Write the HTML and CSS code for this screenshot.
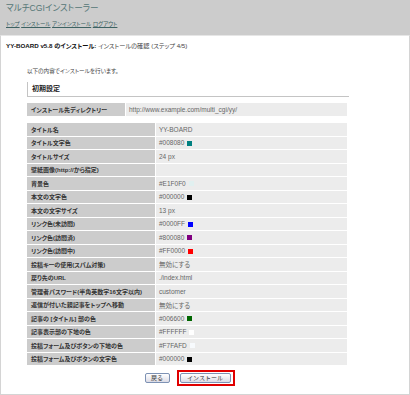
FILE: index.html
```html
<!DOCTYPE html>
<html lang="ja">
<head>
    <meta charset="UTF-8">
    <title>マルチCGIインストーラー</title>
    <link rel="stylesheet" href="styles.css">
</head>
<body>
    <!-- Header -->
    <div class="header">
        <h1>マルチCGIインストーラー</h1>
        <div class="nav">
            <a href="#">トップ</a>
            <a href="#">インストール</a>
            <a href="#">アンインストール</a>
            <a href="#">ログアウト</a>
        </div>
    </div>

    <!-- Main -->
    <div class="main">
        <p class="step"><b>YY-BOARD v5.8 のインストール:</b> インストールの確認 (ステップ 4/5)</p>

        <div class="section">
            <p class="lead">以下の内容でインストールを行います。</p>
            <h2>初期設定</h2>

            <table class="dir">
                <tr><th>インストール先ディレクトリー</th><td>http://www.example.com/multi_cgi/yy/</td></tr>
            </table>

            <table class="settings">
                <tr><th>タイトル名</th><td>YY-BOARD</td></tr>
                <tr><th>タイトル文字色</th><td>#008080 <span class="swatch c-teal"></span></td></tr>
                <tr><th>タイトルサイズ</th><td>24 px</td></tr>
                <tr><th>壁紙画像(http://から指定)</th><td></td></tr>
                <tr><th>背景色</th><td>#E1F0F0 <span class="swatch c-bg"></span></td></tr>
                <tr><th>本文の文字色</th><td>#000000 <span class="swatch c-black"></span></td></tr>
                <tr><th>本文の文字サイズ</th><td>13 px</td></tr>
                <tr><th>リンク色(未訪問)</th><td>#0000FF <span class="swatch c-blue"></span></td></tr>
                <tr><th>リンク色(訪問済)</th><td>#800080 <span class="swatch c-purple"></span></td></tr>
                <tr><th>リンク色(訪問中)</th><td>#FF0000 <span class="swatch c-red"></span></td></tr>
                <tr><th>投稿キーの使用(スパム対策)</th><td>無効にする</td></tr>
                <tr><th>戻り先のURL</th><td>./index.html</td></tr>
                <tr><th>管理者パスワード(半角英数字16文字以内)</th><td>customer</td></tr>
                <tr><th>返信が付いた親記事をトップへ移動</th><td>無効にする</td></tr>
                <tr><th>記事の [タイトル] 部の色</th><td>#006600 <span class="swatch c-green"></span></td></tr>
                <tr><th>記事表示部の下地の色</th><td>#FFFFFF <span class="swatch c-white"></span></td></tr>
                <tr><th>投稿フォーム及びボタンの下地の色</th><td>#F7FAFD <span class="swatch c-form"></span></td></tr>
                <tr><th>投稿フォーム及びボタンの文字色</th><td>#000000 <span class="swatch c-black"></span></td></tr>
            </table>

            <div class="buttons">
                <button class="btn-back">戻る</button>
                <span class="highlight"><button class="btn-install">インストール</button></span>
            </div>
        </div>
    </div>
</body>
</html>
```

FILE: styles.css
```css
/* General */
* {
    box-sizing: border-box;
    margin: 0;
    padding: 0;
}

body {
    width: 410px;
    background-color: #ffffff;
    color: #333333;
    font-family: "Liberation Sans", "Noto Sans CJK JP", sans-serif;
    font-feature-settings: "palt";
}

/* Header */
.header {
    height: 35px;
    background-color: #cccccc;
    padding: 1px 0 0 6px;
}

.header h1 {
    font-size: 8.6px;
    line-height: 14px;
    font-weight: normal;
    color: #557777;
}

.nav {
    margin-top: 5px;
    font-size: 5.5px;
    line-height: 8px;
}

.nav a {
    color: #3d6262;
}

/* Main box */
.main {
    height: 360px;
    border: 1px solid #d4d4d4;
    border-top-color: #e6e6e6;
    padding: 5px 0 0 5px;
}

.step {
    font-size: 6.2px;
    line-height: 10px;
    color: #444444;
}

.step b {
    color: #111111;
}

.section {
    width: 322px;
    margin-left: 21px;
}

.lead {
    margin-top: 15px;
    font-size: 5.6px;
    line-height: 10px;
    color: #444444;
}

.section h2 {
    margin-top: 6px;
    height: 15px;
    padding-left: 4px;
    border-left: 1px solid #c4c4c4;
    border-bottom: 1px solid #c4c4c4;
    font-size: 7px;
    line-height: 14px;
    color: #222222;
}

/* Tables */
table {
    width: 322px;
    border-collapse: separate;
    border-spacing: 1px;
    margin-left: -1px;
    font-size: 6px;
}

th {
    background-color: #cccccc;
    color: #333333;
    text-align: left;
    font-weight: bold;
    padding: 0 4px;
    white-space: nowrap;
}

td {
    background-color: #ececec;
    color: #666666;
    font-size: 6.5px;
    padding: 0 3px;
}

.dir {
    margin-top: 5px;
}

.dir th,
.dir td {
    height: 13px;
}

.dir th {
    width: 98px;
}

.settings {
    margin-top: 5px;
}

.settings th,
.settings td {
    height: 12.5px;
}

.settings th {
    width: 128px;
}

.swatch {
    display: inline-block;
    width: 5px;
    height: 5px;
    margin-left: 1px;
    vertical-align: -0.5px;
}

.c-teal { background-color: #008080; }
.c-bg { background-color: #e1f0f0; }
.c-black { background-color: #000000; }
.c-blue { background-color: #0000ff; }
.c-purple { background-color: #800080; }
.c-red { background-color: #ff0000; }
.c-green { background-color: #006600; }
.c-white { background-color: #ffffff; }
.c-form { background-color: #f7fafd; }

/* Buttons */
.buttons {
    display: flex;
    justify-content: center;
    align-items: center;
    gap: 7px;
    margin-top: 4px;
    padding-left: 3px;
}

button {
    height: 10px;
    border: 1px solid #7d92b4;
    border-radius: 2px;
    background: linear-gradient(#ffffff, #dcdce6);
    font-family: "Liberation Sans", "Noto Sans CJK JP", sans-serif;
    font-size: 6px;
    line-height: 8px;
    color: #333333;
}

.btn-back {
    width: 25px;
}

.btn-install {
    width: 51px;
}

.highlight {
    display: flex;
    padding: 1px 2px 1px 1px;
    border: 2px solid #e00000;
}
```
